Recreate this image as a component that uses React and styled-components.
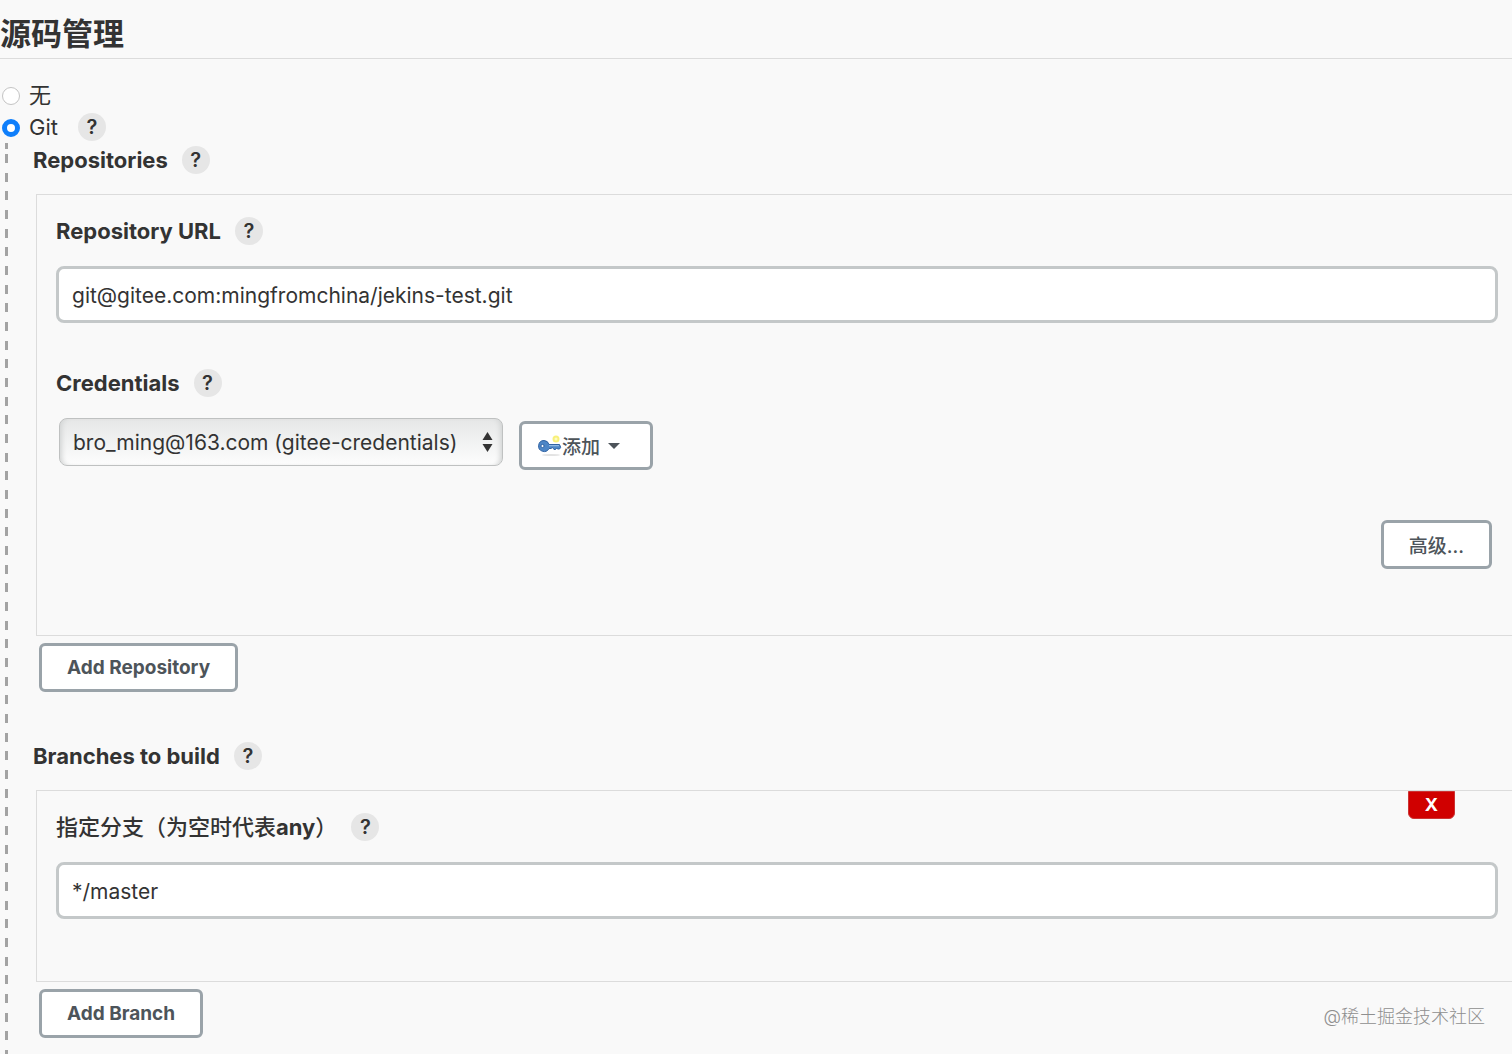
import React, { Component } from 'react';
import styled, { createGlobalStyle } from 'styled-components';

const GlobalStyle = createGlobalStyle`
  * {
    box-sizing: border-box;
  }
  body {
    margin: 0;
    background: #f9f9f9;
    color: #333;
    font-family: Inter, "Noto Sans CJK SC", sans-serif;
    font-size: 21px;
    line-height: 32px;
  }
  button, input, select {
    font-family: inherit;
    color: inherit;
  }
`;
const Page = styled.main`
  position: relative;
  display: flex;
  flex-direction: column;
  min-height: 100vh;
`;
const Heading = styled.h1`
  margin: 0 0 20px;
  padding: 11px 0 1px;
  border-bottom: 1px solid #dcdcdc;
  font-size: 31px;
  font-weight: 600;
  line-height: 46px;
`;
const RadioRow = styled.div`
  display: flex;
  align-items: center;
  height: 32px;
  padding-left: 2px;
`;
const Radio = styled.input`
  appearance: none;
  flex: none;
  width: 18px;
  height: 18px;
  margin: 2px 9px 0 0;
  border: 1px solid #c4c4c4;
  border-radius: 50%;
  background: #fff;
  &:checked {
    border: 5px solid #0f7ffb;
  }
`;
const RadioLabel = styled.label`
  margin-right: 20px;
  font-size: 22px;
`;
/* dashed rail on the left of the settings of the selected option */
const Nested = styled.div`
  flex: 1;
  padding: 1px 0 16px 33px;
  background-image:
    linear-gradient(#a3a3a3, #a3a3a3),
    linear-gradient(
      #a3a3a3 9px, transparent 9px, transparent 19px,
      #a3a3a3 19px, #a3a3a3 28px, transparent 28px, transparent 37px,
      #a3a3a3 37px, #a3a3a3 46px, transparent 46px
    );
  background-size: 3px 6px, 3px 56px;
  background-position: 5px 0, 5px 11px;
  background-repeat: no-repeat, repeat-y;
`;
const LabelRow = styled.div`
  display: flex;
  align-items: center;
  height: 32px;
  gap: 14px;
  font-size: 22px;
  font-weight: ${props => (props.$cjk ? 500 : 700)};
`;
const HelpButton = styled.button`
  flex: none;
  width: 28px;
  height: 28px;
  padding: 0;
  border: 0;
  border-radius: 50%;
  background: #e6e6e6;
  font-size: 20px;
  font-weight: 600;
  line-height: 28px;
  cursor: pointer;
`;
const Panel = styled.section`
  position: relative;
  margin: 18px 0 7px 3px;
  padding: 20px 14px ${props => props.$bottom}px 19px;
  border: solid #dcdcdc;
  border-width: 1px 0 1px 1px;
`;
const TextInput = styled.input`
  display: block;
  width: 100%;
  height: 57px;
  margin-top: 19px;
  padding: 2px 13px 0;
  border: 3px solid #c4c8c9;
  border-radius: 8px;
  background: #fff;
  font-size: 21px;
`;
const Credentials = styled.div`
  margin-top: 44px;
`;
const Controls = styled.div`
  display: flex;
  align-items: flex-end;
  gap: 16px;
  margin-top: 19px;
  padding-left: 3px;
`;
const SelectBox = styled.div`
  display: grid;
  align-items: center;
  justify-items: end;
  margin-bottom: 4px;
  & > * {
    grid-area: 1 / 1;
  }
  svg {
    margin-right: 10px;
    pointer-events: none;
  }
`;
const Select = styled.select`
  appearance: none;
  height: 48px;
  padding: 0 44px 0 13px;
  border: 1px solid #bfc1c1;
  border-radius: 8px;
  background: linear-gradient(#e6e7e7, #fdfdfd);
  box-shadow: inset 5px 0 5px -3px #d2d4d4, inset -5px 0 5px -3px #d2d4d4;
  font-size: 21px;
`;
const Button = styled.button`
  display: inline-flex;
  align-items: center;
  height: 49px;
  padding: 0 ${props => (props.$compact ? 16 : 25)}px;
  border: 3px solid #9aa3a9;
  border-radius: 6px;
  background: #fff;
  color: #4d545a;
  font-size: 19px;
  font-weight: ${props => (props.$cjk ? 500 : 700)};
  cursor: pointer;
`;
const Caret = styled.span`
  margin: 0 14px 0 8px;
  border: 6px solid transparent;
  border-top-color: #4d545a;
  border-bottom: 0;
`;
const Advanced = styled.div`
  display: flex;
  justify-content: flex-end;
  margin-top: 50px;
  padding-right: 6px;
`;
const Actions = styled.div`
  display: flex;
  padding-left: 6px;
`;
const Section = styled.section`
  & + & {
    margin-top: 48px;
  }
`;
const DeleteButton = styled.button`
  position: absolute;
  top: 0;
  right: 57px;
  width: 47px;
  height: 28px;
  padding: 0;
  border: 1px solid #c33;
  border-radius: 0 0 6px 6px;
  background: #d00000;
  color: #fff;
  font-size: 18px;
  font-weight: 700;
  line-height: 26px;
`;
const Watermark = styled.span`
  position: absolute;
  right: 27px;
  bottom: 21px;
  color: #8f8f8f;
  font-size: 18px;
  font-weight: 300;
`;

const KeyIcon = () => (
  <svg width="24" height="24" viewBox="0 0 24 24" aria-hidden="true">
    <ellipse cx="13" cy="21" rx="9" ry="1" fill="#e3e3e3" />
    <circle cx="18" cy="5" r="2.500" fill="#fdfbc0" stroke="#f8f07a" strokeWidth="2" />
    <path
      d="M6 6.500a5.500 5.500 0 1 0 5 8h2l1.500-1 1.500 2h1.500l1-1.500 1 1h2l1.200-1.700-1.200-2.800H11A5.500 5.500 0 0 0 6 6.500z"
      fill="#4d86c6"
      stroke="#2f62a3"
    />
    <path d="M11 11.700h10" stroke="#9fc3ea" />
    <circle cx="4.500" cy="12" r="1.600" fill="#fff" stroke="#2f62a3" />
  </svg>
);

const UpDownIcon = () => (
  <svg width="11" height="20" viewBox="0 0 11 20" aria-hidden="true">
    <path d="M5.500 0 10.500 8H.5zM5.500 20 10.500 12H.5z" fill="#333" />
  </svg>
);

const Help = ({ topic }) => <HelpButton type="button" aria-label={`Help: ${topic}`}>?</HelpButton>;

export default class App extends Component {

  constructor() {
    super();
    this.state = {
      scm: 'git',
      url: 'git@gitee.com:mingfromchina/jekins-test.git',
      branch: '*/master',
    };
  }

  _handleInputChange(state, event) {
    this.setState({[state]: event.target.value});
  }

  render() {
    return (
      <Page>
        <GlobalStyle />
        <Heading>源码管理</Heading>
        <RadioRow>
          <Radio
            id='scm_none'
            type='radio'
            name='scm'
            value='none'
            checked={this.state.scm === 'none'}
            onChange={this._handleInputChange.bind(this, 'scm')}/>
          <RadioLabel htmlFor='scm_none'>无</RadioLabel>
        </RadioRow>
        <RadioRow>
          <Radio
            id='scm_git'
            type='radio'
            name='scm'
            value='git'
            checked={this.state.scm === 'git'}
            onChange={this._handleInputChange.bind(this, 'scm')}/>
          <RadioLabel htmlFor='scm_git'>Git</RadioLabel>
          <Help topic='Git' />
        </RadioRow>

        <Nested>
          <Section>
            <LabelRow>
              <span>Repositories</span>
              <Help topic='Repositories' />
            </LabelRow>
            <Panel $bottom={66}>
              <LabelRow>
                <label htmlFor='repo_url'>Repository URL</label>
                <Help topic='Repository URL' />
              </LabelRow>
              <TextInput
                id='repo_url'
                type='text'
                value={this.state.url}
                onChange={this._handleInputChange.bind(this, 'url')}/>
              <Credentials>
                <LabelRow>
                  <label htmlFor='credentials'>Credentials</label>
                  <Help topic='Credentials' />
                </LabelRow>
                <Controls>
                  <SelectBox>
                    <Select id='credentials'>
                      <option>bro_ming@163.com (gitee-credentials)</option>
                    </Select>
                    <UpDownIcon />
                  </SelectBox>
                  <Button type='button' $compact $cjk>
                    <KeyIcon />
                    添加
                    <Caret />
                  </Button>
                </Controls>
              </Credentials>
              <Advanced>
                <Button type='button' $cjk>高级...</Button>
              </Advanced>
            </Panel>
            <Actions>
              <Button type='button'>Add Repository</Button>
            </Actions>
          </Section>

          <Section>
            <LabelRow>
              <span>Branches to build</span>
              <Help topic='Branches to build' />
            </LabelRow>
            <Panel $bottom={62}>
              <DeleteButton type='button' aria-label='Delete branch'>X</DeleteButton>
              <LabelRow $cjk>
                <label htmlFor='branch'>指定分支（为空时代表<b>any</b>）</label>
                <Help topic='指定分支' />
              </LabelRow>
              <TextInput
                id='branch'
                type='text'
                value={this.state.branch}
                onChange={this._handleInputChange.bind(this, 'branch')}/>
            </Panel>
            <Actions>
              <Button type='button'>Add Branch</Button>
            </Actions>
          </Section>
        </Nested>
        <Watermark>@稀土掘金技术社区</Watermark>
      </Page>
    );
  }
}
